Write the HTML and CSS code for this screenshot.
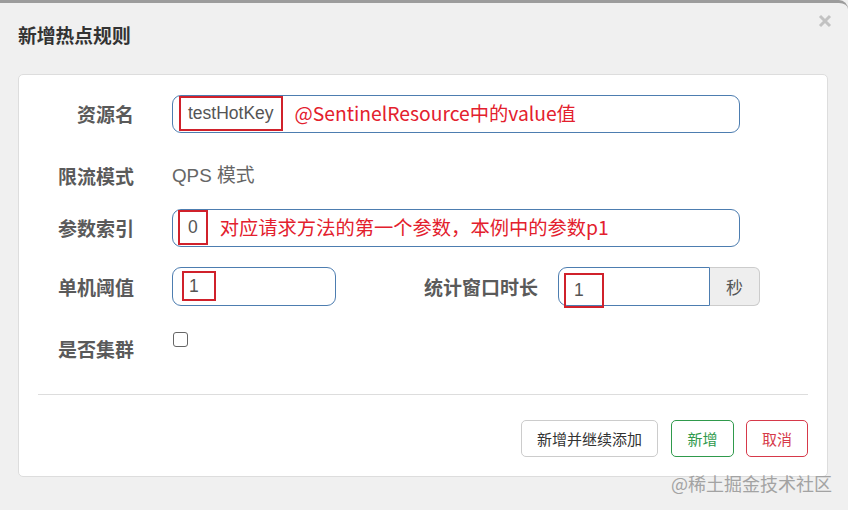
FILE: index.html
```html
<!DOCTYPE html>
<html lang="zh-CN">
<head>
<meta charset="utf-8">
<title>新增热点规则</title>
<link rel="stylesheet" href="styles.css">
</head>
<body>
<div class="modal">
  <div class="header">
    <h4 class="title">新增热点规则</h4>
    <span class="close"><svg width="14" height="14" viewBox="0 0 14 14"><path d="M2 2 L12 12 M12 2 L2 12" stroke="#c2c2c2" stroke-width="3" stroke-linecap="butt"/></svg></span>
  </div>
  <div class="card">
    <div class="row r1">
      <label class="lbl">资源名</label>
      <div class="input wide">
        <span class="mark m1">testHotKey</span>
        <span class="note">@SentinelResource中的value值</span>
      </div>
    </div>
    <div class="row r2">
      <label class="lbl">限流模式</label>
      <span class="static">QPS 模式</span>
    </div>
    <div class="row r3">
      <label class="lbl">参数索引</label>
      <div class="input wide p3">
        <span class="mark m3">0</span>
        <span class="note">对应请求方法的第一个参数，本例中的参数p1</span>
      </div>
    </div>
    <div class="row r4">
      <label class="lbl">单机阈值</label>
      <div class="input small p4">
        <span class="mark m4">1</span>
      </div>
      <label class="lbl lbl2">统计窗口时长</label>
      <div class="group">
        <div class="input gin p5">
          <span class="mark m5">1</span>
        </div>
        <span class="addon">秒</span>
      </div>
    </div>
    <div class="row r5">
      <label class="lbl">是否集群</label>
      <span class="check"></span>
    </div>
    <hr class="sep">
    <div class="footer">
      <button class="btn btn-default">新增并继续添加</button>
      <button class="btn btn-ok">新增</button>
      <button class="btn btn-cancel">取消</button>
    </div>
  </div>
  <div class="watermark">@稀土掘金技术社区</div>
</div>
</body>
</html>
```

FILE: styles.css
```css
* { box-sizing: border-box; }
html, body {
  margin: 0;
  padding: 0;
  width: 848px;
  height: 510px;
  overflow: hidden;
  background: #f0f0f0;
}
body {
  font-family: "Liberation Sans", "Noto Sans CJK SC", sans-serif;
}
.modal {
  position: relative;
  width: 848px;
  height: 510px;
  background: #f0f0f0;
  border-top: 3px solid #9c9c9c;
  border-top-right-radius: 9px;
}
.header {
  display: flex;
  justify-content: space-between;
  align-items: flex-start;
  height: 71px;
  padding: 0 16px 0 18px;
}
.title {
  margin: 20px 0 0;
  font-family: "Noto Sans CJK SC", sans-serif;
  font-weight: 700;
  font-size: 18.8px;
  line-height: 24px;
  color: #333;
}
.close {
  margin-top: 11px;
  width: 14px;
  height: 14px;
  display: block;
}
.close svg { display: block; }
.card {
  margin: 0 20px 0 18px;
  background: #fff;
  border: 1px solid #ddd;
  border-radius: 5px;
  padding: 20px 19px 19px 19px;
  height: 403px;
}
.row {
  display: flex;
  align-items: center;
  height: 38px;
}
.r2 { margin-top: 24px; }
.r3 { margin-top: 14px; }
.r4 { margin-top: 20px; height: 39px; }
.r5 { margin-top: 20px; height: 42px; align-items: flex-start; }
.lbl {
  width: 96px;
  margin-right: 38px;
  text-align: right;
  font-family: "Noto Sans CJK SC", sans-serif;
  font-weight: 700;
  font-size: 19px;
  line-height: 38px;
  color: #5a5a5a;
  flex: none;
}
.r5 .lbl { padding-top: 4px; }
.input {
  display: flex;
  align-items: flex-start;
  height: 38px;
  border: 1px solid #4d7db0;
  border-radius: 9px;
  background: #fff;
  padding-left: 6px;
  flex: none;
}
.wide { width: 568px; }
.small { width: 164px; height: 39px; padding-left: 9px; }
.p3 { padding-left: 5px; }
.p5 { padding-left: 5px; }
.mark {
  display: block;
  border: 2px solid #d0212b;
  height: 35px;
  line-height: 31px;
  padding: 0 7px;
  font-family: "Liberation Sans", sans-serif;
  font-size: 17.5px;
  color: #555;
  flex: none;
}
.m3 { padding: 0 8px; }
.m4 { margin-top: 3px; height: 30px; line-height: 26px; width: 34px; padding: 0 5px; }
.m5 { margin-top: 5px; width: 40px; padding: 0 8px; }
.note {
  display: block;
  margin-left: 12px;
  font-family: "Noto Sans CJK SC", sans-serif;
  font-size: 19.3px;
  line-height: 35px;
  color: #e3202d;
  white-space: nowrap;
}
.static {
  font-family: "Liberation Sans", "Noto Sans CJK SC", sans-serif;
  font-size: 18.8px;
  line-height: 38px;
  color: #666;
}
.lbl2 {
  width: 202px;
  margin-right: 20px;
}
.group {
  display: flex;
  height: 39px;
  flex: none;
}
.gin {
  width: 152px;
  height: 39px;
  border-radius: 9px 0 0 9px;
}
.addon {
  width: 50px;
  height: 39px;
  border: 1px solid #ccc;
  border-left: none;
  border-radius: 0 6px 6px 0;
  background: #eee;
  text-align: center;
  line-height: 37px;
  font-family: "Noto Sans CJK SC", sans-serif;
  font-size: 17px;
  color: #555;
}
.check {
  display: block;
  width: 15px;
  height: 15px;
  margin-top: 6px;
  margin-left: 1px;
  border: 1.5px solid #666;
  border-radius: 3px;
  background: #fff;
}
.sep {
  margin: 26px 0 0;
  border: 0;
  border-top: 1px solid #ddd;
  height: 0;
}
.footer {
  display: flex;
  justify-content: flex-end;
  gap: 12px;
  margin-top: 25px;
}
.btn {
  height: 37px;
  border-radius: 5px;
  background: #fff;
  font-family: "Noto Sans CJK SC", sans-serif;
  font-size: 15px;
  line-height: 35px;
  padding: 0;
  cursor: pointer;
}
.btn-default {
  width: 137px;
  border: 1px solid #ccc;
  color: #333;
  margin-right: 1px;
}
.btn-ok {
  width: 63px;
  border: 1px solid #2f9a4c;
  color: #2f9a4c;
}
.btn-cancel {
  width: 62px;
  border: 1px solid #d6394a;
  color: #d6394a;
}
.watermark {
  position: absolute;
  left: 671px;
  top: 468px;
  font-family: "Noto Sans CJK SC", sans-serif;
  font-size: 18px;
  line-height: 24px;
  color: #a3a3a3;
  white-space: nowrap;
}
```
